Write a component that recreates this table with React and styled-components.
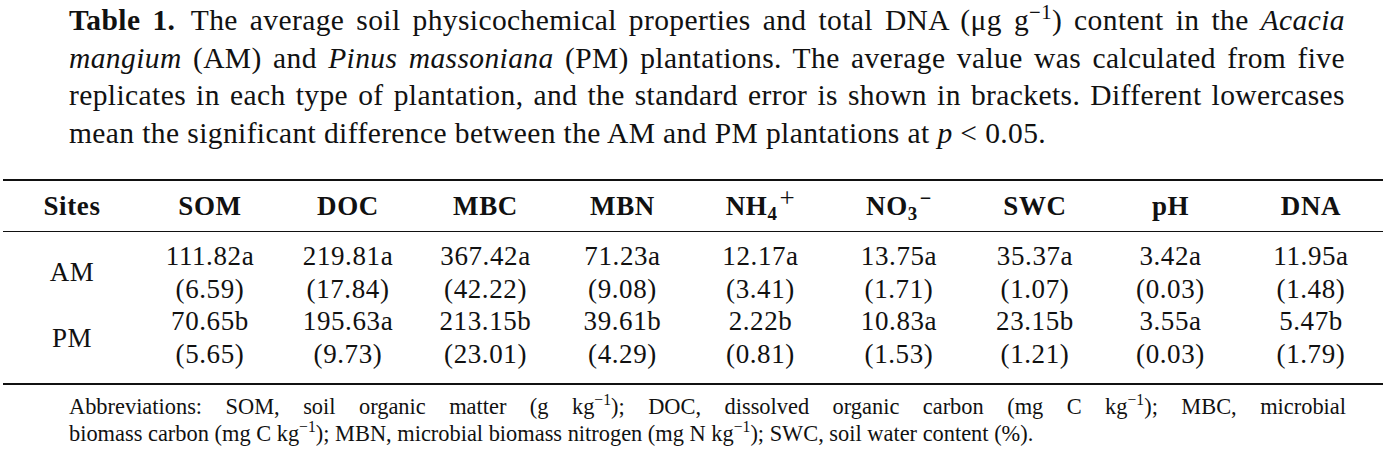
import React from "react";
import styled, { createGlobalStyle } from "styled-components";

const GlobalStyle = createGlobalStyle`
  body {
    margin: 0;
    background: #ffffff;
    color: #111111;
    font-family: "Liberation Serif", "Times New Roman", serif;
  }
`;

const columns = [138, 138, 138, 137, 137, 139, 138, 134, 137, 144];

const rows = [
  {
    site: "AM",
    values: [
      ["111.82a", "6.59"],
      ["219.81a", "17.84"],
      ["367.42a", "42.22"],
      ["71.23a", "9.08"],
      ["12.17a", "3.41"],
      ["13.75a", "1.71"],
      ["35.37a", "1.07"],
      ["3.42a", "0.03"],
      ["11.95a", "1.48"],
    ],
  },
  {
    site: "PM",
    values: [
      ["70.65b", "5.65"],
      ["195.63a", "9.73"],
      ["213.15b", "23.01"],
      ["39.61b", "4.29"],
      ["2.22b", "0.81"],
      ["10.83a", "1.53"],
      ["23.15b", "1.21"],
      ["3.55a", "0.03"],
      ["5.47b", "1.79"],
    ],
  },
];

const App = () => {
  return (
    <Page>
      <GlobalStyle />
      <Caption>
        <CaptionLine>
          <Label>Table 1.</Label> The average soil physicochemical properties and total DNA (μg g<Sup>−1</Sup>) content in the <em>Acacia</em>
        </CaptionLine>
        <CaptionLine>
          <em>mangium</em> (AM) and <em>Pinus massoniana</em> (PM) plantations. The average value was calculated from five
        </CaptionLine>
        <CaptionLine>
          replicates in each type of plantation, and the standard error is shown in brackets. Different lowercases
        </CaptionLine>
        <CaptionLine $last>
          mean the significant difference between the AM and PM plantations at <em>p</em> &lt; 0.05.
        </CaptionLine>
      </Caption>

      <DataTable>
        <colgroup>
          {columns.map((w, i) => (
            <col key={i} style={{ width: w }} />
          ))}
        </colgroup>
        <thead>
          <tr>
            <HeadCell>Sites</HeadCell>
            <HeadCell>SOM</HeadCell>
            <HeadCell>DOC</HeadCell>
            <HeadCell>MBC</HeadCell>
            <HeadCell>MBN</HeadCell>
            <HeadCell>
              NH<Sub>4</Sub>
              <Charge>+</Charge>
            </HeadCell>
            <HeadCell>
              NO<Sub>3</Sub>
              <Charge $minus>−</Charge>
            </HeadCell>
            <HeadCell>SWC</HeadCell>
            <HeadCell>pH</HeadCell>
            <HeadCell>DNA</HeadCell>
          </tr>
        </thead>
        <tbody>
          {rows.map((row, r) => (
            <tr key={row.site}>
              <BodyCell $first={r === 0} $last={r === rows.length - 1}>
                {row.site}
              </BodyCell>
              {row.values.map(([mean, se], i) => (
                <BodyCell key={i} $first={r === 0} $last={r === rows.length - 1}>
                  {mean}
                  <br />({se})
                </BodyCell>
              ))}
            </tr>
          ))}
        </tbody>
      </DataTable>

      <Notes>
        <NoteLine>
          Abbreviations: SOM, soil organic matter (g kg<Sup>−1</Sup>); DOC, dissolved organic carbon (mg C kg<Sup>−1</Sup>); MBC, microbial
        </NoteLine>
        <NoteLine $last>
          biomass carbon (mg C kg<Sup>−1</Sup>); MBN, microbial biomass nitrogen (mg N kg<Sup>−1</Sup>); SWC, soil water content (%).
        </NoteLine>
      </Notes>
    </Page>
  );
};

const Page = styled.div`
  width: 1383px;
  padding-top: 2px;
`;

const Caption = styled.div`
  margin-left: 69px;
  width: 1276px;
  font-size: 29.5px;
  line-height: 37.5px;
  letter-spacing: 0.4px;
`;

const CaptionLine = styled.div`
  text-align: justify;
  text-align-last: ${(props) => (props.$last ? "left" : "justify")};
`;

const Label = styled.strong`
  font-weight: bold;
  margin-right: 4px;
`;

const Sup = styled.sup`
  font-size: 0.7em;
  line-height: 0;
  vertical-align: 0.55em;
`;

const Sub = styled.sub`
  font-size: 0.7em;
  line-height: 0;
  vertical-align: -0.25em;
`;

const Charge = styled.sup`
  font-weight: ${(props) => (props.$minus ? "bold" : "normal")};
  font-size: ${(props) => (props.$minus ? "0.75em" : "1em")};
  line-height: 0;
  margin-left: 2px;
  vertical-align: ${(props) => (props.$minus ? "0.5em" : "0.3em")};
`;

const DataTable = styled.table`
  margin: 27px 0 0 3px;
  width: 1380px;
  border-collapse: collapse;
  table-layout: fixed;
  border-top: 2px solid #111111;
  border-bottom: 2px solid #111111;
`;

const HeadCell = styled.th`
  font-weight: bold;
  font-size: 27px;
  line-height: 30px;
  letter-spacing: 0.6px;
  padding: 10px 0;
  text-align: center;
  white-space: nowrap;
  border-bottom: 1px solid #111111;
`;

const BodyCell = styled.td`
  font-size: 27px;
  line-height: 32.7px;
  letter-spacing: 0.6px;
  text-align: center;
  vertical-align: middle;
  white-space: nowrap;
  padding: ${(props) => (props.$first ? "8px" : "0")} 0
    ${(props) => (props.$last ? "12px" : "0")};
`;

const Notes = styled.div`
  margin: 8px 0 0 69px;
  width: 1277px;
  font-size: 22.4px;
  line-height: 27px;
`;

const NoteLine = styled.div`
  text-align: justify;
  text-align-last: ${(props) => (props.$last ? "left" : "justify")};
`;

export default App;
